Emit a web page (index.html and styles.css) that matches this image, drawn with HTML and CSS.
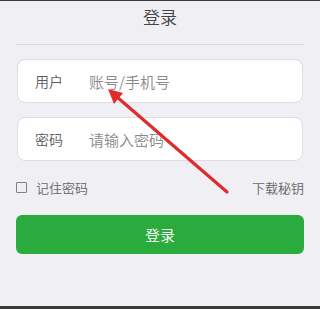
FILE: index.html
```html
<!DOCTYPE html>
<html lang="zh-CN">
<head>
  <meta charset="UTF-8">
  <meta name="viewport" content="width=device-width, initial-scale=1.0">
  <title>登录</title>
  <link rel="stylesheet" href="styles.css">
</head>
<body>
  <div class="panel">
    <!-- Header -->
    <div class="panel-title">登录</div>

    <!-- Fields -->
    <div class="field">
      <span class="field-label">用户</span>
      <span class="field-input">账号/手机号</span>
    </div>
    <div class="field">
      <span class="field-label">密码</span>
      <span class="field-input">请输入密码</span>
    </div>

    <!-- Options -->
    <div class="options">
      <label class="remember">
        <span class="checkbox"></span>
        记住密码
      </label>
      <span class="download">下载秘钥</span>
    </div>

    <button class="login-button">登录</button>
  </div>

  <!-- Annotation arrow -->
  <svg class="arrow" width="320" height="309" viewBox="0 0 320 309">
    <line x1="227" y1="192" x2="117" y2="97" stroke="#e02b2b" stroke-width="3.2" stroke-linecap="round"/>
    <polygon points="108,89 123,93 114,104" fill="#e02b2b"/>
  </svg>
</body>
</html>
```

FILE: styles.css
```css
body {
  margin: 0;
  padding: 0;
  background: #3a3a3a; /* dark strip above and below the sheet */
  font-family: "Noto Sans CJK SC", "Noto Sans", sans-serif;
}

.panel {
  margin-top: 1px;
  height: 305px;
  box-sizing: border-box;
  padding: 0 16px;
  background: #efeff4;
  display: flex;
  flex-direction: column;
}

.panel-title {
  height: 43px;
  line-height: 32px;
  text-align: center;
  font-size: 17px;
  font-weight: 350;
  color: #444444;
  border-bottom: 1px solid #dcdce0;
}

.field {
  margin: 14px 1px 0;
  height: 44px;
  box-sizing: border-box;
  background: #ffffff;
  border: 1px solid #dedee2;
  border-radius: 8px;
  display: flex;
  align-items: center;
  padding-left: 17px;
}

.field-label {
  width: 54px;
  font-size: 14px;
  font-weight: 350;
  color: #5a5a5a;
}

.field-input {
  font-size: 15px;
  font-weight: 350;
  color: #8a8a8a;
}

.options {
  margin-top: 15px;
  height: 22px;
  display: flex;
  align-items: center;
  justify-content: space-between;
  font-size: 13px;
  font-weight: 350;
  color: #666666;
}

.remember {
  display: flex;
  align-items: center;
  gap: 9px;
}

.checkbox {
  width: 11px;
  height: 11px;
  box-sizing: border-box;
  border: 1.5px solid #808080;
  border-radius: 1px;
}

.download {
  color: #666666;
}

.login-button {
  margin-top: 17px;
  height: 39px;
  border: none;
  border-radius: 6px;
  background: #2aab3e;
  color: #ffffff;
  font-family: inherit;
  font-size: 15px;
  font-weight: 350;
}

.arrow {
  position: absolute;
  left: 0;
  top: 0;
}
```
